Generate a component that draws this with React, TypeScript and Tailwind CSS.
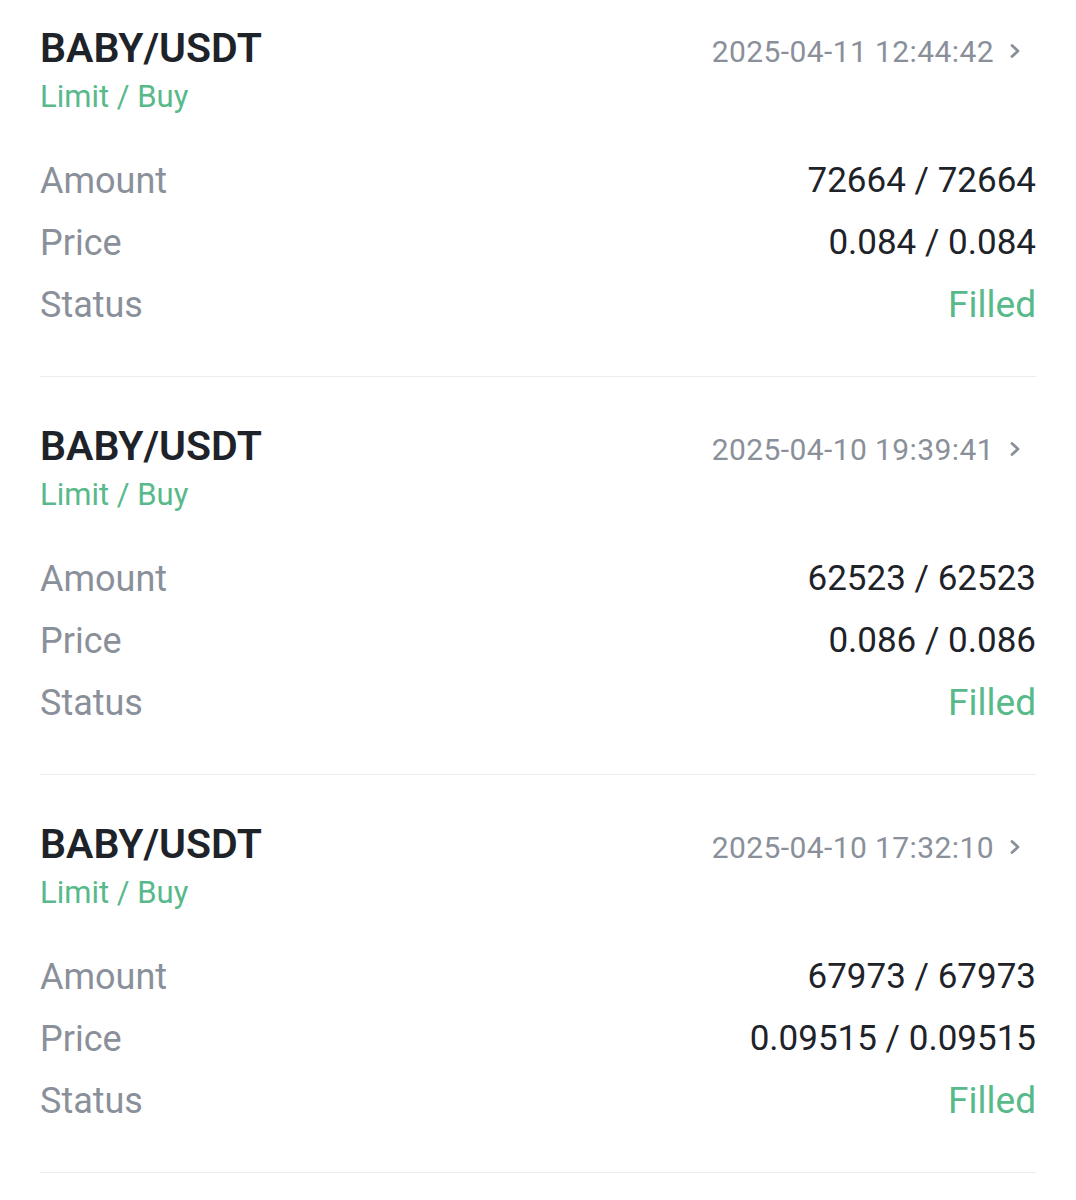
import React from "react";

type Order = { date: string; amount: string; price: string };

const orders: Order[] = [
  { date: "2025-04-11 12:44:42", amount: "72664 / 72664", price: "0.084 / 0.084" },
  { date: "2025-04-10 19:39:41", amount: "62523 / 62523", price: "0.086 / 0.086" },
  { date: "2025-04-10 17:32:10", amount: "67973 / 67973", price: "0.09515 / 0.09515" },
];

const sans = { fontFamily: "Roboto, 'Noto Sans', sans-serif" };

function Chevron() {
  return (
    <svg width="14" height="16" viewBox="0 0 14 16" className="ml-[14px] mt-[-3px]">
      <path d="M4 2.5 L10 8 L4 13.5" fill="none" stroke="#8a909a" strokeWidth="2.8" strokeLinecap="round" strokeLinejoin="round" />
    </svg>
  );
}

function Card({ o, first }: { o: Order; first: boolean }) {
  return (
    <div className={first ? "pt-[26px]" : "pt-[47px]"}>
      <div className="flex items-center justify-between h-[44px]">
        <div className="text-[41px] font-semibold text-[#1e2329] leading-[44px]">BABY/USDT</div>
        <div className="flex items-center mt-[8px] mr-[14px]">
          <span className="text-[30px] text-[#8a909a] leading-[36px] tracking-[0.4px]">{o.date}</span>
          <Chevron />
        </div>
      </div>
      <div className="mt-[9px] text-[31px] leading-[36px] text-[#58b98a]">Limit / Buy</div>
      <div className="mt-[35px]">
        <div className="flex items-center justify-between h-[62px]">
          <span className="text-[36px] text-[#8a909a]">Amount</span>
          <span className="text-[35px] text-[#1e2329]">{o.amount}</span>
        </div>
        <div className="flex items-center justify-between h-[62px]">
          <span className="text-[36px] text-[#8a909a]">Price</span>
          <span className="text-[35px] text-[#1e2329]">{o.price}</span>
        </div>
        <div className="flex items-center justify-between h-[62px]">
          <span className="text-[36px] text-[#8a909a]">Status</span>
          <span className="text-[37px] text-[#58b98a]">Filled</span>
        </div>
      </div>
      <div className="pb-[40px]" />
      <div className="h-px bg-[#ececee]" />
    </div>
  );
}

export default function App() {
  return (
    <div className="w-[1076px] h-[1200px] bg-white px-[40px] overflow-hidden" style={sans}>
      {orders.map((o, i) => (
        <Card key={i} o={o} first={i === 0} />
      ))}
    </div>
  );
}
